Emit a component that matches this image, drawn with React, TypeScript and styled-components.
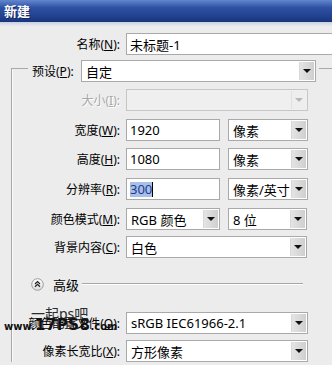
import styled, { createGlobalStyle } from 'styled-components';

const GlobalStyle = createGlobalStyle`
  html, body {
    margin: 0;
    padding: 0;
    background: #ececec;
  }
  body {
    font-family: "Noto Sans", "Noto Sans CJK SC", sans-serif;
    font-size: 12px;
    color: #000;
  }
`;

type SelectProps = {
  w: number;
  value?: string;
  disabled?: boolean;
};

function Select({ w, value, disabled }: SelectProps) {
  return (
    <SelectBox $w={w} $disabled={disabled}>
      <SelectValue>{value}</SelectValue>
      <DropButton $disabled={disabled}>
        <Arrow $disabled={disabled} />
      </DropButton>
    </SelectBox>
  );
}

export default function App() {
  return (
    <>
      <GlobalStyle />
      <Window>
        <TitleBar>新建</TitleBar>
        <Strip />
        <Row $mt={7}>
          <Label $w={126}>
            名称(<u>N</u>):
          </Label>
          <TextBox $w={220}>未标题-1</TextBox>
        </Row>

        <Group>
          <Legend>
            <LegendInner>
              <LegendLabel>
                预设(<u>P</u>):
              </LegendLabel>
              <Select w={235} value="自定" />
            </LegendInner>
          </Legend>

          <Row $mt={7}>
            <Label $w={114} $disabled>
              大小(<u>I</u>):
            </Label>
            <Select w={182} disabled />
          </Row>
          <Row $mt={8}>
            <Label $w={114}>
              宽度(<u>W</u>):
            </Label>
            <TextBox $w={94}>1920</TextBox>
            <Gap />
            <Select w={80} value="像素" />
          </Row>
          <Row $mt={7}>
            <Label $w={114}>
              高度(<u>H</u>):
            </Label>
            <TextBox $w={94}>1080</TextBox>
            <Gap />
            <Select w={80} value="像素" />
          </Row>
          <Row $mt={8}>
            <Label $w={114}>
              分辨率(<u>R</u>):
            </Label>
            <TextBox $w={94}>
              <Selected>300</Selected>
              <Caret />
            </TextBox>
            <Gap />
            <Select w={80} value="像素/英寸" />
          </Row>
          <Row $mt={8}>
            <Label $w={114}>
              颜色模式(<u>M</u>):
            </Label>
            <Select w={94} value="RGB 颜色" />
            <Gap />
            <Select w={79} value="8 位" />
          </Row>
          <Row $mt={6}>
            <Label $w={114}>
              背景内容(<u>C</u>):
            </Label>
            <Select w={181} value="白色" />
          </Row>

          <AdvancedRow>
            <svg width="13" height="13" viewBox="0 0 13 13">
              <defs>
                <linearGradient id="adv" x1="0" y1="0" x2="0" y2="1">
                  <stop offset="0" stopColor="#ffffff" />
                  <stop offset="1" stopColor="#dcdcdc" />
                </linearGradient>
              </defs>
              <circle cx="6.5" cy="6.5" r="5.8" fill="url(#adv)" stroke="#9c9c9c" />
              <polyline points="4,6 6.5,3.6 9,6" fill="none" stroke="#222" strokeWidth="1.2" />
              <polyline points="4,8.8 6.5,6.4 9,8.8" fill="none" stroke="#222" strokeWidth="1.2" />
            </svg>
            <AdvancedText>高级</AdvancedText>
            <Rule />
          </AdvancedRow>

          <Row $mt={19}>
            <Label $w={114}>
              颜色配置文件(<u>O</u>):
            </Label>
            <Select w={182} value="sRGB IEC61966-2.1" />
          </Row>
          <Row $mt={6}>
            <Label $w={114}>
              像素长宽比(<u>X</u>):
            </Label>
            <Select w={182} value="方形像素" />
          </Row>
        </Group>

        <Watermark>
          <WatermarkTop>一起ps吧</WatermarkTop>
          <WatermarkSite>
            <small>www.</small>17PS8<small>.com</small>
          </WatermarkSite>
        </Watermark>
      </Window>
    </>
  );
}

const Window = styled.div`
  position: relative;
  width: 332px;
  height: 365px;
  overflow: hidden;
  background: #ececec;
`;
const TitleBar = styled.div`
  height: 22px;
  line-height: 22px;
  padding-left: 4px;
  color: #fff;
  font-weight: bold;
  font-size: 13px;
  text-shadow: 1px 1px 0 #102868;
  background: linear-gradient(#6287cf 0%, #2f51a3 35%, #22418f 75%, #1a3479 100%);
`;
const Strip = styled.div`
  height: 4px;
  background: linear-gradient(#c6d0e2, #e6e9ef);
`;
const Row = styled.div<{ $mt: number }>`
  display: flex;
  align-items: center;
  height: 22px;
  margin-top: ${(p) => p.$mt}px;
`;
const Label = styled.div<{ $w: number; $disabled?: boolean }>`
  width: ${(p) => p.$w}px;
  flex-shrink: 0;
  box-sizing: border-box;
  padding-right: 6px;
  text-align: right;
  white-space: nowrap;
  color: ${(p) => (p.$disabled ? '#a8a8a8' : '#000')};
  text-shadow: ${(p) => (p.$disabled ? '1px 1px 0 #fff' : 'none')};
`;
const TextBox = styled.div<{ $w: number }>`
  width: ${(p) => p.$w}px;
  height: 22px;
  flex-shrink: 0;
  box-sizing: border-box;
  display: flex;
  align-items: center;
  padding-left: 3px;
  background: #fff;
  border: 1px solid #a9a9a9;
  white-space: nowrap;
  font-size: 13px;
`;
const Selected = styled.span`
  background: #a7bfe9;
  color: #1f3a8c;
  line-height: 15px;
`;
const Caret = styled.span`
  width: 1px;
  height: 15px;
  background: #000;
`;
const Gap = styled.div`
  width: 8px;
  flex-shrink: 0;
`;
const SelectBox = styled.div<{ $w: number; $disabled?: boolean }>`
  width: ${(p) => p.$w}px;
  height: 22px;
  flex-shrink: 0;
  box-sizing: border-box;
  display: flex;
  align-items: stretch;
  background: ${(p) => (p.$disabled ? '#efefef' : '#fff')};
  border: 1px solid ${(p) => (p.$disabled ? '#c6c6c6' : '#a9a9a9')};
`;
const SelectValue = styled.div`
  flex: 1;
  display: flex;
  align-items: center;
  padding-left: 4px;
  white-space: nowrap;
  overflow: hidden;
  font-size: 13px;
`;
const DropButton = styled.div<{ $disabled?: boolean }>`
  width: 14px;
  margin: 1px;
  display: flex;
  align-items: center;
  justify-content: center;
  background: ${(p) =>
    p.$disabled ? '#eeeeee' : 'linear-gradient(90deg, #e4e4e4, #cfcfcf)'};
  border-left: 1px solid ${(p) => (p.$disabled ? '#e0e0e0' : '#d8d8d8')};
`;
const Arrow = styled.div<{ $disabled?: boolean }>`
  width: 0;
  height: 0;
  border-left: 4px solid transparent;
  border-right: 4px solid transparent;
  border-top: 4px solid ${(p) => (p.$disabled ? '#b8b8b8' : '#111')};
`;
const Group = styled.fieldset`
  margin: -1px 0 0 11px;
  padding: 0;
  min-width: 0;
  width: 420px;
  border: none;
  border-top: 1px solid #a8a8a8;
  border-left: 1px solid #a8a8a8;
  box-shadow: inset 1px 0 0 #fafafa;
`;
const Legend = styled.legend`
  margin-left: 16px;
  padding: 6px 3px 0 4px;
`;
const LegendInner = styled.div`
  display: flex;
  align-items: center;
  height: 22px;
`;
const LegendLabel = styled.div`
  width: 49px;
  white-space: nowrap;
`;
const AdvancedRow = styled.div`
  display: flex;
  align-items: center;
  height: 18px;
  margin-top: 17px;
  padding-left: 19px;
`;
const AdvancedText = styled.span`
  margin-left: 9px;
  font-size: 13px;
`;
const Rule = styled.div`
  width: 221px;
  margin-left: 3px;
  border-top: 1px solid #a6a6a6;
  border-bottom: 1px solid #fff;
`;
const Watermark = styled.div`
  position: absolute;
  left: 4px;
  top: 306px;
  pointer-events: none;
`;
const WatermarkTop = styled.div`
  margin-left: 27px;
  font-size: 14px;
  line-height: 15px;
  color: #2b2b2b;
`;
const WatermarkSite = styled.div`
  margin-top: -4px;
  font-family: "DejaVu Sans", sans-serif;
  font-weight: bold;
  font-size: 15px;
  line-height: 16px;
  color: #111;
  letter-spacing: 0.5px;
  small {
    font-size: 10px;
    letter-spacing: 0;
  }
`;
